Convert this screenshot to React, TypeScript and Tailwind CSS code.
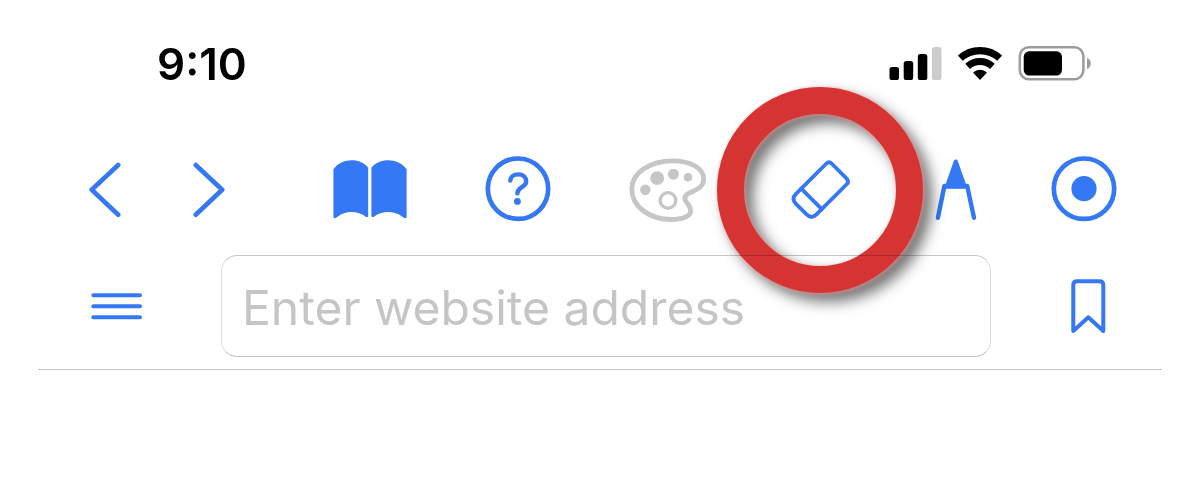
import type { ReactNode } from "react";

type IconProps = { box: string; className: string; children: ReactNode };

function Icon({ box, className, children }: IconProps) {
  return (
    <svg
      viewBox={box}
      className={`block shrink-0 ${className}`}
      fill="none"
      stroke="currentColor"
      strokeLinecap="round"
      strokeLinejoin="round"
      aria-hidden="true"
    >
      {children}
    </svg>
  );
}

function StatusBar() {
  return (
    <div className="flex h-16 items-center justify-between pr-[70px] pl-[119px] text-black">
      <time className="text-[44px] leading-none font-semibold">9:10</time>
      <div className="flex items-center gap-[15px]">
        <Icon box="889 46 53 36" className="h-[36px] w-[53px]">
          <g fill="currentColor" stroke="none">
            <rect x="889.5" y="67" width="9.5" height="13" rx="2.6" />
            <rect x="903.7" y="61" width="9.5" height="19" rx="2.6" />
            <rect x="917.8" y="54" width="9.5" height="26" rx="2.6" />
            <rect x="932" y="47" width="9.5" height="33" rx="2.6" fill="#cccccc" />
          </g>
        </Icon>
        <Icon box="957 46 46 36" className="h-[36px] w-[46px]">
          <g strokeLinecap="butt">
            <path d="M960.3 58.1A29.5 29.5 0 0 1 999.7 58.1" strokeWidth="7.2" />
            <path d="M967.6 66.3A18.5 18.5 0 0 1 992.4 66.3" strokeWidth="7" />
            <path d="M980 80L973 72.4A10.5 10.5 0 0 1 987 72.4Z" fill="currentColor" stroke="none" />
          </g>
        </Icon>
        <Icon box="1018 46 74 36" className="h-[36px] w-[74px]">
          <rect x="1019.8" y="47.3" width="63.6" height="32" rx="9" stroke="#9b9b9b" strokeWidth="2.5" />
          <rect x="1023.7" y="51.3" width="38.3" height="24.2" rx="5.5" fill="currentColor" stroke="none" />
          <path d="M1087 58C1092 59.5 1092 67.5 1087 69Z" fill="#9b9b9b" stroke="none" />
        </Icon>
      </div>
    </div>
  );
}

function HighlightRing() {
  return (
    <span className="pointer-events-none absolute top-1/2 left-1/2 z-10 size-[206px] -translate-x-1/2 -translate-y-1/2 rounded-full border-[27px] border-[#d63432] mix-blend-multiply [filter:drop-shadow(1px_1px_2px_rgba(255,150,150,0.7))_drop-shadow(8px_8px_7px_rgba(0,0,0,0.55))]" />
  );
}

function Toolbar() {
  return (
    <nav className="grid h-[72px] grid-cols-[103fr_141fr_152fr_144fr_162fr_144fr_116fr_66fr] items-center pr-[45px] pl-[51px]">
      <button type="button" aria-label="Back" className="justify-self-start">
        <Icon box="89 161 33 58" className="h-[58px] w-[33px]">
          <path d="M118.2 165L91.7 189.8L118.2 214.7" strokeWidth="4.6" />
        </Icon>
      </button>
      <button type="button" aria-label="Forward" className="justify-self-start">
        <Icon box="192 161 33 58" className="h-[58px] w-[33px]">
          <path d="M195.7 165L222.2 189.8L195.7 214.7" strokeWidth="4.6" />
        </Icon>
      </button>
      <button type="button" aria-label="Dictionary" className="justify-self-start">
        <Icon box="333 160 74 60" className="h-[60px] w-[74px]">
          <g fill="currentColor" stroke="none">
            <path d="M333.4 169.3C341.5 157.5 361 157.5 368.2 167.8V216.3Q367 218.2 365.3 216.6C358.5 210.4 344.5 210.4 338 216.6Q334.2 219.6 333.4 217Z" />
            <path d="M406.6 169.3C398.5 157.5 379 157.5 371.4 167.8V216.3Q372.6 218.2 374.3 216.6C381.1 210.4 395.1 210.4 402 216.6Q405.8 219.6 406.6 217Z" />
          </g>
        </Icon>
      </button>
      <button type="button" aria-label="Help" className="justify-self-start">
        <Icon box="485 156 66 68" className="h-[68px] w-[66px]">
          <circle cx="518" cy="188.7" r="30.2" strokeWidth="4.7" />
          <path d="M510.3 180.6C510.6 176.8 513.8 174.4 518.2 174.4C523 174.4 526.2 177.2 526.2 181.4C526.2 187.4 517.4 187 517.4 193.2" strokeWidth="4.4" />
          <circle cx="517.4" cy="201.4" r="3.4" fill="currentColor" stroke="none" />
        </Icon>
      </button>
      <button type="button" aria-label="Colors" disabled className="justify-self-start text-[#c6c6c6]">
        <Icon box="629 157 78 66" className="h-[66px] w-[78px]">
          <path
            d="M631.8 189.3C631.8 172.5 650 160.8 673 160.8C691 160.8 703.7 168.5 703.7 179C703.7 188.5 693.5 190.5 688 193.8C683.8 196.4 684.2 199.2 686.6 202.4C689 205.3 690.6 207.6 690.6 210.8C690.6 217.2 681 219.5 671.5 219.5C649 219.5 631.8 206.2 631.8 189.3Z"
            strokeWidth="4.8"
          />
          <g fill="currentColor" stroke="none">
            <circle cx="645.3" cy="189.8" r="5.2" />
            <circle cx="657.2" cy="178.2" r="6.9" />
            <circle cx="673.4" cy="174.2" r="5.5" />
            <circle cx="688" cy="177.2" r="4.3" />
          </g>
          <circle cx="668" cy="200.4" r="7.8" strokeWidth="3.4" />
        </Icon>
      </button>
      <button type="button" aria-label="Eraser" className="relative justify-self-start">
        <Icon box="791 161 58 58" className="size-[58px] overflow-visible">
          <g transform="rotate(-45 820.8 189.6)" strokeWidth="3.8">
            <path d="M800.2 175.1H842.9Q846.9 175.1 846.9 179.1V200.1Q846.9 204.1 842.9 204.1H800.2Q793.2 204.1 793.2 197.1V182.1Q793.2 175.1 800.2 175.1Z" />
            <path d="M807.6 175.1V204.1" />
          </g>
        </Icon>
        <HighlightRing />
      </button>
      <button type="button" aria-label="Drawing compass" className="justify-self-start">
        <Icon box="935 159 42 62" className="h-[62px] w-[42px]">
          <path d="M955.8 161.5L946.8 186.8H964.8Z" fill="currentColor" strokeWidth="4" />
          <path d="M937.9 217.8L944.4 186H967.2L974 217.8" strokeWidth="4.4" />
        </Icon>
      </button>
      <button type="button" aria-label="Record" className="justify-self-start">
        <Icon box="1051 156 66 68" className="h-[68px] w-[66px]">
          <circle cx="1084" cy="188.7" r="30.2" strokeWidth="4.7" />
          <circle cx="1084" cy="188.7" r="12.6" fill="currentColor" stroke="none" />
        </Icon>
      </button>
    </nav>
  );
}

function AddressBar() {
  return (
    <form className="flex items-center gap-20 pr-14 pl-[52px]" onSubmit={(event) => event.preventDefault()}>
      <button type="button" aria-label="Menu">
        <Icon box="90 292 51 28" className="h-[28px] w-[51px] overflow-visible">
          <path d="M93.3 295.2H140M93.3 306.2H140M93.3 317.2H140" strokeWidth="4" />
        </Icon>
      </button>
      <input
        type="url"
        aria-label="Website address"
        placeholder="Enter website address"
        className="h-[102px] min-w-0 flex-1 rounded-2xl border border-x-[#dedede] border-y-[#c6c6c6] bg-transparent px-5 pt-0.5 text-[48px] text-black outline-none placeholder:text-[#c5c5c5]"
      />
      <button type="button" aria-label="Bookmark">
        <Icon box="1071 279 35 55" className="h-[55px] w-[35px]">
          <path d="M1077 281.2H1099.5Q1103.3 281.2 1103.3 285V331L1088.3 317.3L1073.3 331V285Q1073.3 281.2 1077 281.2Z" strokeWidth="4" />
        </Icon>
      </button>
    </form>
  );
}

export default function App() {
  return (
    <main className="min-h-screen bg-white px-[38px] pt-8 font-['Inter',sans-serif] text-[#3478f6]">
      <header className="border-b border-[#c4c4c4] pb-3">
        <StatusBar />
        <div className="pt-[58px] pb-[29px]">
          <Toolbar />
        </div>
        <AddressBar />
      </header>
    </main>
  );
}
